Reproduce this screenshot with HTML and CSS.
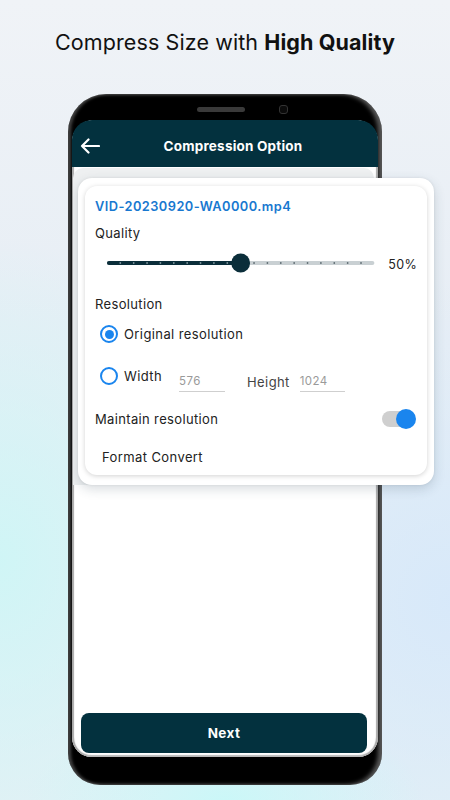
FILE: index.html
```html
<!DOCTYPE html>
<html>
<head>
<meta charset="utf-8">
<link rel="stylesheet" href="styles.css">
</head>
<body>
<h1 class="headline">Compress Size with <b>High Quality</b></h1>
<div class="phone">
  <div class="notch">
    <span class="speaker"></span>
    <span class="camera"></span>
  </div>
  <div class="screen">
    <div class="appbar">
      <svg class="back" width="20" height="16" viewBox="0 0 20 16"><path d="M19 8H2M8.5 1.5L2 8l6.5 6.5" fill="none" stroke="#fff" stroke-width="2.2" stroke-linecap="round" stroke-linejoin="round"/></svg>
      <span class="appbar-title">Compression Option</span>
    </div>
    <div class="panel">
      <div class="card">
        <div class="card-inner">
          <div class="filename">VID-20230920-WA0000.mp4</div>
          <div class="label quality">Quality</div>
          <div class="slider-row">
            <svg class="slider" width="282" height="22" viewBox="0 0 282 22">
              <rect x="6" y="9" width="270" height="4" rx="2" fill="#c9d0d3"/>
              <rect x="6" y="9" width="135" height="4" rx="2" fill="#0b2e3a"/>
              <g fill="#7e959c">
                <circle cx="19.5" cy="11" r="0.9"/><circle cx="33" cy="11" r="0.9"/><circle cx="46.5" cy="11" r="0.9"/><circle cx="60" cy="11" r="0.9"/><circle cx="73.5" cy="11" r="0.9"/><circle cx="87" cy="11" r="0.9"/><circle cx="100.5" cy="11" r="0.9"/><circle cx="114" cy="11" r="0.9"/><circle cx="127.5" cy="11" r="0.9"/>
              </g>
              <g fill="#5e6c72">
                <circle cx="154.5" cy="11" r="0.9"/><circle cx="168" cy="11" r="0.9"/><circle cx="181.5" cy="11" r="0.9"/><circle cx="195" cy="11" r="0.9"/><circle cx="208.5" cy="11" r="0.9"/><circle cx="222" cy="11" r="0.9"/><circle cx="235.5" cy="11" r="0.9"/><circle cx="249" cy="11" r="0.9"/><circle cx="262.5" cy="11" r="0.9"/>
              </g>
              <circle cx="141" cy="11" r="9.5" fill="#0b2e3a"/>
            </svg>
            <span class="pct">50%</span>
          </div>
          <div class="label resolution">Resolution</div>
          <div class="radio-row original">
            <span class="radio on"></span>
            <span class="radio-text">Original resolution</span>
          </div>
          <div class="radio-row custom">
            <span class="radio"></span>
            <span class="radio-text">Width</span>
            <span class="field w">576</span>
            <span class="field-label">Height</span>
            <span class="field h">1024</span>
          </div>
          <div class="toggle-row">
            <span class="label">Maintain resolution</span>
            <span class="switch"><span class="knob"></span></span>
          </div>
          <div class="format">Format Convert</div>
        </div>
      </div>
    </div>
    <div class="spacer"></div>
    <button class="next">Next</button>
  </div>
</div>
</body>
</html>
```

FILE: styles.css
```css
* { box-sizing: border-box; }
html, body { margin: 0; padding: 0; }
body {
  width: 450px;
  height: 800px;
  overflow: hidden;
  font-family: Inter, "Noto Sans", sans-serif;
  background:
    radial-gradient(ellipse 240px 320px at 0px 560px, rgba(205,246,246,0.9), rgba(205,246,246,0) 100%),
    radial-gradient(ellipse 200px 90px at 225px 800px, rgba(200,248,248,0.9), rgba(200,248,248,0) 100%),
    radial-gradient(ellipse 300px 320px at 450px 600px, rgba(214,232,250,0.9), rgba(214,232,250,0) 100%),
    linear-gradient(180deg, #f0f3f7 0%, #e7eef5 40%, #e4f0f5 100%);
}
.headline {
  margin: 29px 0 0;
  height: 26px;
  text-align: center;
  font-size: 21.5px;
  font-weight: 400;
  color: #111;
  letter-spacing: 0.1px;
  line-height: 26px;
}
.headline b { font-weight: 700; }

.phone {
  margin: 39px 0 0 68px;
  width: 314px;
  height: 691px;
  background: #000;
  border-radius: 38px 38px 32px 32px;
  padding: 0 4px 28px 4px;
  display: flex;
  flex-direction: column;
  box-shadow: inset 3px 0 3px rgba(255,255,255,0.25), inset -4px 0 4px rgba(255,255,255,0.35);
}
.notch {
  height: 26px;
  display: flex;
  align-items: center;
  justify-content: center;
  padding-top: 4px;
  gap: 34px;
  padding-left: 35px;
}
.speaker {
  width: 48px; height: 5px; border-radius: 3px; background: #3a3a3a;
}
.camera {
  width: 9px; height: 9px; border-radius: 3px; border: 1.5px solid #333; background: #0b0b0b;
}
.screen {
  flex: 1;
  background: #fff;
  border-radius: 22px 22px 20px 20px;
  display: flex;
  flex-direction: column;
  box-shadow: inset 2px 0 1px #a9a9a9, inset -2px 0 1px #a9a9a9, inset 0 -2px 1px #bbb;
}
.appbar {
  height: 47px;
  background: #03313e;
  border-radius: 20px 20px 0 0;
  display: flex;
  align-items: center;
  padding: 4px 0 0 8px;
}
.back { display: block; }
.appbar-title {
  flex: 1;
  text-align: center;
  color: #fff;
  font-weight: 700;
  font-size: 13.5px;
  margin-left: -12px;
  letter-spacing: 0.2px;
}
.panel {
  margin: 1px 4px 0 1px;
  background: #eef0f1;
  border-radius: 10px 10px 0 0;
  padding: 10px 0 0 5px;
}
.card {
  width: 356px;
  height: 307px;
  background: #fff;
  border-radius: 14px;
  padding: 8px 7px 10px 7px;
  box-shadow: 0 4px 12px rgba(40,60,80,0.18), 0 0 3px rgba(0,0,0,0.08);
}
.card-inner {
  height: 100%;
  border-radius: 12px;
  background: #fff;
  box-shadow: 0 1px 5px rgba(0,0,0,0.18);
  padding: 13px 10px 0 10px;
  color: #222;
}
.filename {
  color: #1878d0;
  font-weight: 600;
  font-size: 12.8px;
  line-height: 16px;
  letter-spacing: 0.45px;
}
.label {
  font-size: 13px;
  color: #222;
  letter-spacing: 0.35px;
  line-height: 16px;
}
.quality { margin-top: 10px; }
.slider-row {
  display: flex;
  align-items: center;
  margin-top: 11px;
  margin-left: 6px;
  height: 22px;
}
.slider { display: block; }
.pct {
  margin-left: 8px;
  font-size: 12.5px;
  color: #222;
  letter-spacing: 0.3px;
  padding-top: 2px;
}
.resolution { margin-top: 22px; }
.radio-row {
  display: flex;
  align-items: center;
  font-size: 13px;
  letter-spacing: 0.4px;
  color: #222;
}
.original { margin-top: 12px; height: 20px; }
.custom { margin-top: 24px; height: 22px; }
.radio {
  width: 18px; height: 18px;
  border-radius: 50%;
  border: 2px solid #1a85ee;
  margin-left: 5px;
  margin-right: 6px;
  display: flex;
  align-items: center;
  justify-content: center;
  flex: none;
}
.radio.on::after {
  content: "";
  width: 9px; height: 9px;
  border-radius: 50%;
  background: #1a85ee;
}
.custom .radio { margin-top: -6px; }
.custom .radio-text { margin-top: -7px; }
.field {
  font-size: 11.5px;
  color: #9a9a9a;
  border-bottom: 1px solid #cfcfcf;
  height: 20px;
  line-height: 18px;
  margin-top: 6px;
}
.field.w { width: 46px; margin-left: 17px; }
.field.h { width: 45px; margin-left: 10px; }
.field-label {
  margin-left: 22px;
  font-size: 13px;
  color: #444;
  margin-top: 6px;
}
.toggle-row {
  display: flex;
  align-items: center;
  justify-content: space-between;
  margin-top: 18px;
  height: 22px;
  padding-right: 2px;
}
.switch {
  width: 33px; height: 16px;
  border-radius: 8px;
  background: #cfcfcf;
  position: relative;
  display: block;
}
.knob {
  position: absolute;
  right: -1px; top: -2px;
  width: 20px; height: 20px;
  border-radius: 50%;
  background: #1a85ee;
}
.format {
  margin-top: 19px;
  margin-left: 7px;
  font-size: 13px;
  color: #222;
  letter-spacing: 0.4px;
}
.spacer { flex: 1; }
.next {
  margin: 0 11px 4px 9px;
  height: 40px;
  border: 0;
  border-radius: 8px;
  background: #03313e;
  color: #fff;
  font-family: Inter, "Noto Sans", sans-serif;
  font-weight: 700;
  font-size: 13.5px;
  letter-spacing: 0.4px;
}
```
